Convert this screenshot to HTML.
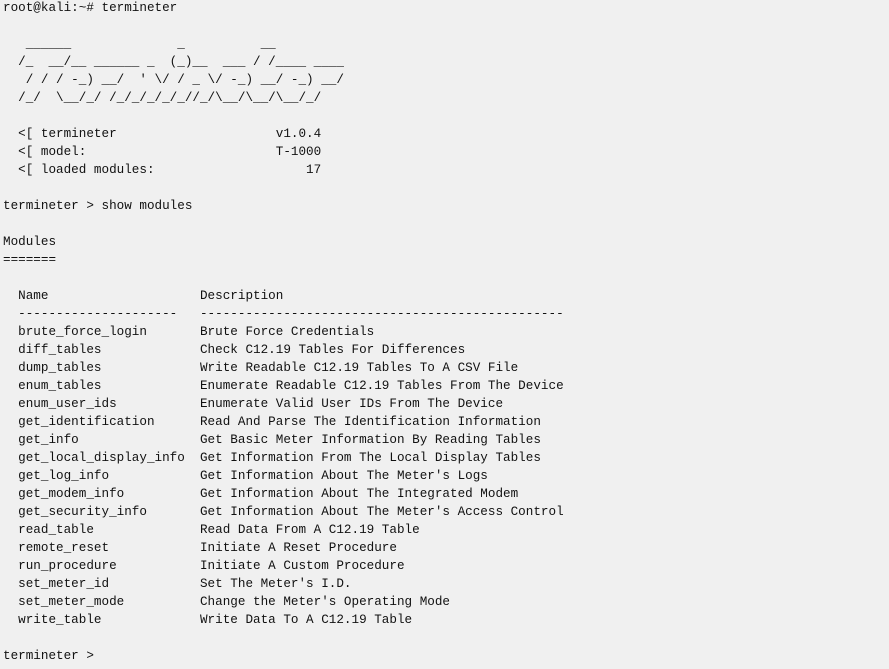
<!DOCTYPE html>
<html><head><meta charset="utf-8"><style>
html,body{margin:0;padding:0;background:#f0f0f0;width:889px;height:669px;overflow:hidden}
pre{margin:0;padding:0 0 0 3px;font-family:"Liberation Mono",monospace;font-size:12.63px;line-height:18px;color:#111;position:relative;top:-1px}
</style></head><body><pre>root@kali:~# termineter

   ______              _          __
  /_  __/__ ______ _  (_)__  ___ / /____ ____
   / / / -_) __/  ' \/ / _ \/ -_) __/ -_) __/
  /_/  \__/_/ /_/_/_/_/_//_/\__/\__/\__/_/

  &lt;[ termineter                     v1.0.4
  &lt;[ model:                         T-1000
  &lt;[ loaded modules:                    17

termineter &gt; show modules

Modules
=======

  Name                    Description
  ---------------------   ------------------------------------------------
  brute_force_login       Brute Force Credentials
  diff_tables             Check C12.19 Tables For Differences
  dump_tables             Write Readable C12.19 Tables To A CSV File
  enum_tables             Enumerate Readable C12.19 Tables From The Device
  enum_user_ids           Enumerate Valid User IDs From The Device
  get_identification      Read And Parse The Identification Information
  get_info                Get Basic Meter Information By Reading Tables
  get_local_display_info  Get Information From The Local Display Tables
  get_log_info            Get Information About The Meter's Logs
  get_modem_info          Get Information About The Integrated Modem
  get_security_info       Get Information About The Meter's Access Control
  read_table              Read Data From A C12.19 Table
  remote_reset            Initiate A Reset Procedure
  run_procedure           Initiate A Custom Procedure
  set_meter_id            Set The Meter's I.D.
  set_meter_mode          Change the Meter's Operating Mode
  write_table             Write Data To A C12.19 Table

termineter &gt;</pre></body></html>
